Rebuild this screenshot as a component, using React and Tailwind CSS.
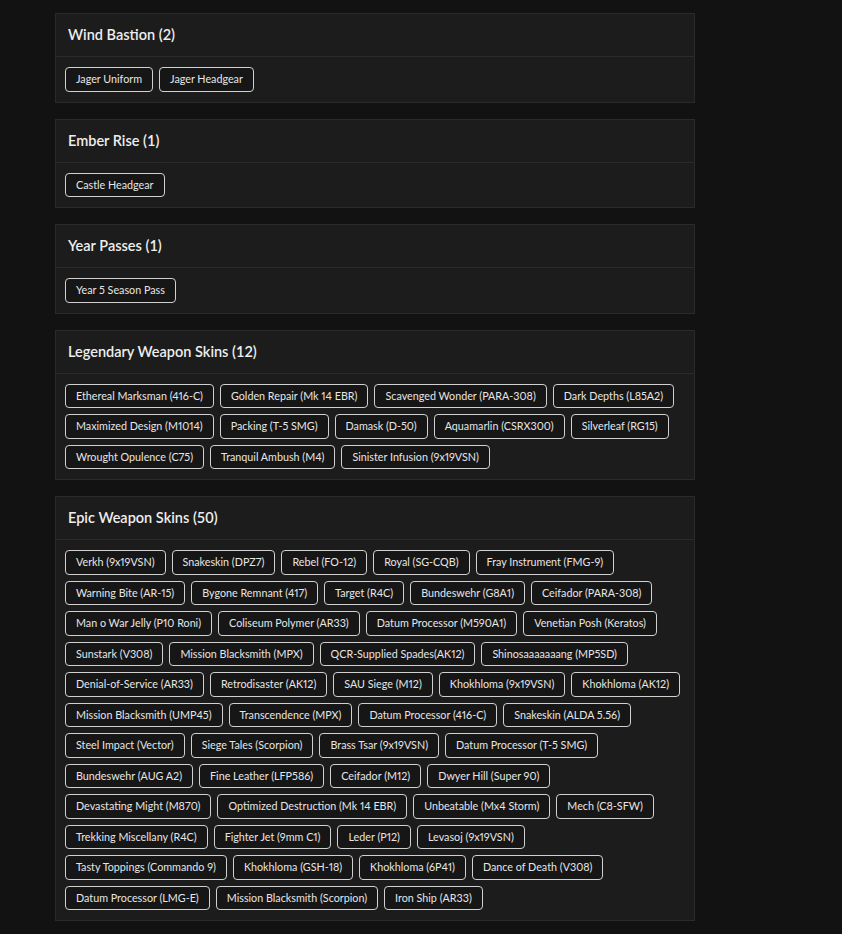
import React from "react";

const sections = [
  { title: "Wind Bastion (2)", rows: [["Jager Uniform", "Jager Headgear"]] },
  { title: "Ember Rise (1)", rows: [["Castle Headgear"]] },
  { title: "Year Passes (1)", rows: [["Year 5 Season Pass"]] },
  {
    title: "Legendary Weapon Skins (12)",
    rows: [
      [
        "Ethereal Marksman (416-C)",
        "Golden Repair (Mk 14 EBR)",
        "Scavenged Wonder (PARA-308)",
        "Dark Depths (L85A2)",
      ],
      [
        "Maximized Design (M1014)",
        "Packing (T-5 SMG)",
        "Damask (D-50)",
        "Aquamarlin (CSRX300)",
        "Silverleaf (RG15)",
      ],
      ["Wrought Opulence (C75)", "Tranquil Ambush (M4)", "Sinister Infusion (9x19VSN)"],
    ],
  },
  {
    title: "Epic Weapon Skins (50)",
    rows: [
      ["Verkh (9x19VSN)", "Snakeskin (DPZ7)", "Rebel (FO-12)", "Royal (SG-CQB)", "Fray Instrument (FMG-9)"],
      ["Warning Bite (AR-15)", "Bygone Remnant (417)", "Target (R4C)", "Bundeswehr (G8A1)", "Ceifador (PARA-308)"],
      ["Man o War Jelly (P10 Roni)", "Coliseum Polymer (AR33)", "Datum Processor (M590A1)", "Venetian Posh (Keratos)"],
      ["Sunstark (V308)", "Mission Blacksmith (MPX)", "QCR-Supplied Spades(AK12)", "Shinosaaaaaaang (MP5SD)"],
      ["Denial-of-Service (AR33)", "Retrodisaster (AK12)", "SAU Siege (M12)", "Khokhloma (9x19VSN)", "Khokhloma (AK12)"],
      ["Mission Blacksmith (UMP45)", "Transcendence (MPX)", "Datum Processor (416-C)", "Snakeskin (ALDA 5.56)"],
      ["Steel Impact (Vector)", "Siege Tales (Scorpion)", "Brass Tsar (9x19VSN)", "Datum Processor (T-5 SMG)"],
      ["Bundeswehr (AUG A2)", "Fine Leather (LFP586)", "Ceifador (M12)", "Dwyer Hill (Super 90)"],
      ["Devastating Might (M870)", "Optimized Destruction (Mk 14 EBR)", "Unbeatable (Mx4 Storm)", "Mech (C8-SFW)"],
      ["Trekking Miscellany (R4C)", "Fighter Jet (9mm C1)", "Leder (P12)", "Levasoj (9x19VSN)"],
      ["Tasty Toppings (Commando 9)", "Khokhloma (GSH-18)", "Khokhloma (6P41)", "Dance of Death (V308)"],
      ["Datum Processor (LMG-E)", "Mission Blacksmith (Scorpion)", "Iron Ship (AR33)"],
    ],
  },
];

export default function App() {
  return (
    <div
      className="min-h-[934px] bg-[#121212] pt-[13px] pl-[55px]"
      style={{ fontFamily: "Lato, 'Noto Sans', sans-serif" }}
    >
      <div className="flex w-[640px] flex-col gap-4">
        {sections.map((s) => (
          <div key={s.title} className="border border-[#2a2a2a] bg-[#1c1c1c]">
            <div className="flex h-[43px] items-center border-b border-[#2a2a2a] px-3 text-[14.5px] font-semibold text-[#eeeeee]">
              {s.title}
            </div>
            <div className="flex flex-col gap-[6px] px-[9px] py-[10px]">
              {s.rows.map((row, i) => (
                <div key={i} className="flex flex-wrap gap-[6px]">
                  {row.map((it) => (
                    <span
                      key={it}
                      className="rounded-[4px] border border-[#d0d0d0] bg-[#161616] px-[10px] py-[3px] text-[10.75px] leading-[16.5px] text-[#e6e6e6] proportional-nums"
                    >
                      {it}
                    </span>
                  ))}
                </div>
              ))}
            </div>
          </div>
        ))}
      </div>
    </div>
  );
}
